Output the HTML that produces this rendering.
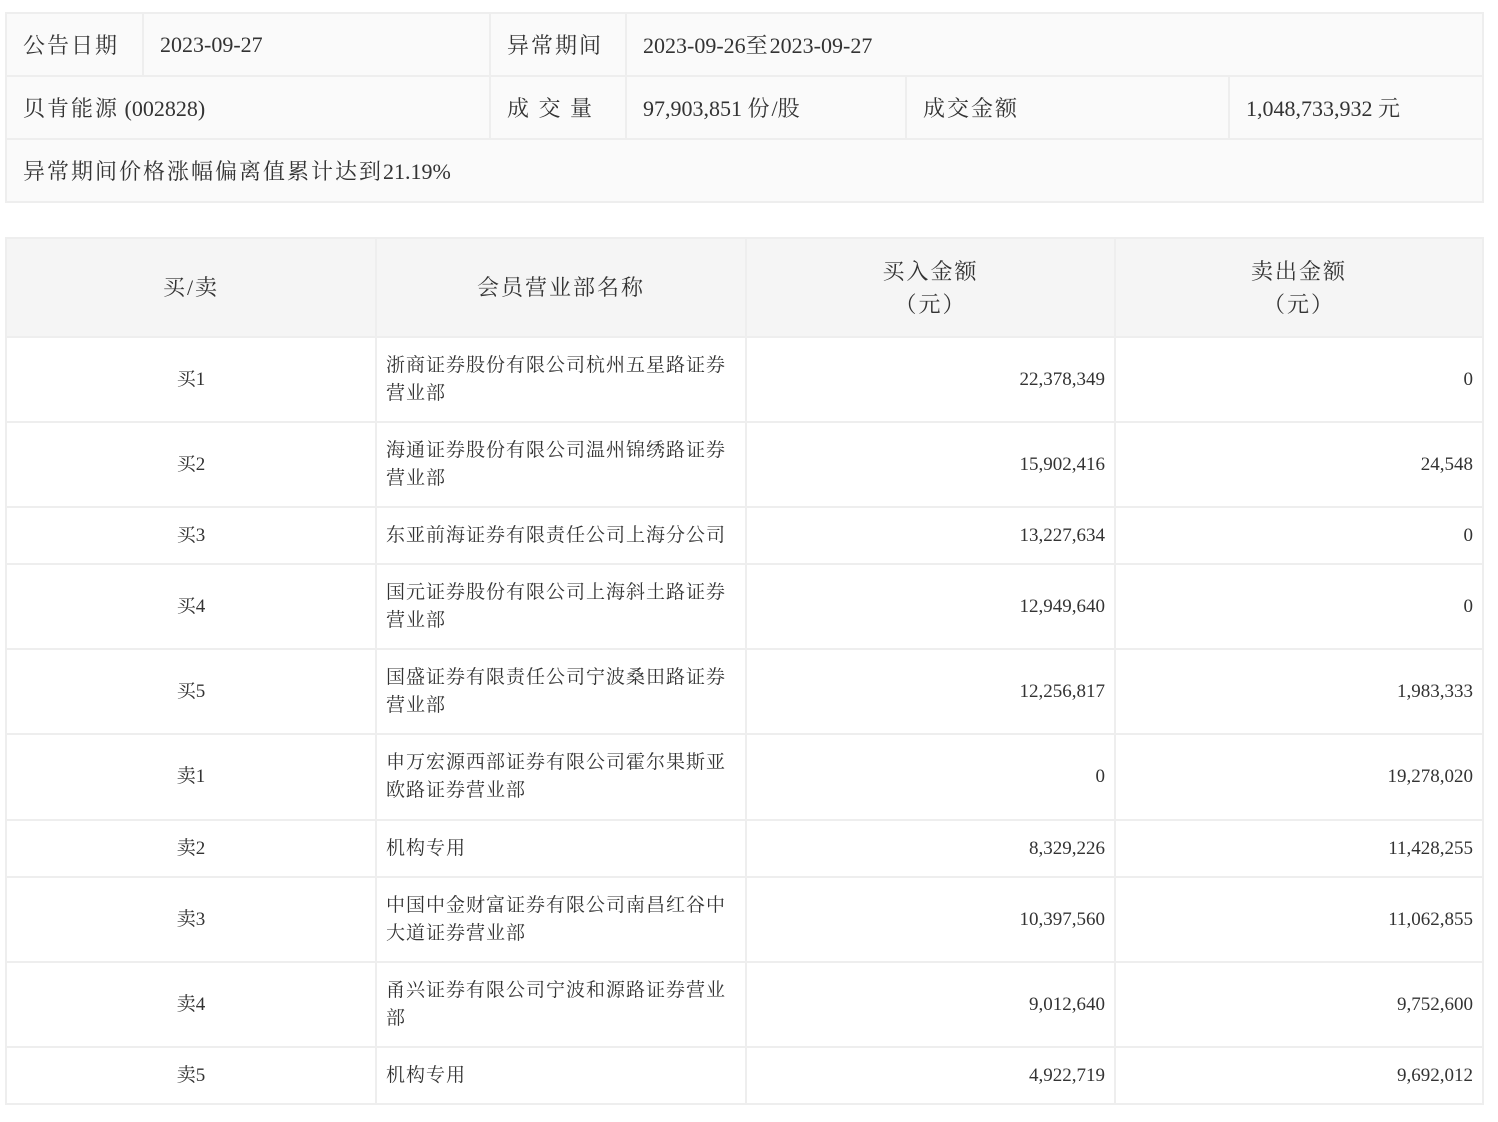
<!DOCTYPE html>
<html><head><meta charset="utf-8"><style>
body{margin:0;background:#fff;font-family:"Liberation Serif","Noto Serif CJK SC",serif;color:#333}
table{border-collapse:collapse;position:absolute;table-layout:fixed}
td{border:2px solid #eee;padding:0}
#t1{left:5px;top:12px;width:1477px;background:#fafafa;font-size:22px}
#t1 td{padding-left:16px;height:61px}
.k{letter-spacing:2px}
#t2{left:5px;top:237px;width:1477px;font-size:19px}
#t2 th{background:#f5f5f5;border:2px solid #eee;font-weight:normal;font-size:22px;height:95px;line-height:33px;letter-spacing:2px}
#t2 td{line-height:28px}
.c{text-align:center}.r{text-align:right;padding-right:9px}.l{padding-left:9px;padding-right:10px;letter-spacing:1px}
</style></head><body>
<table id="t1">
<colgroup><col style="width:137px"><col style="width:347px"><col style="width:136px"><col style="width:280px"><col style="width:323px"><col style="width:254px"></colgroup>
<tr><td class="k">公告日期</td><td>2023-09-27</td><td class="k">异常期间</td><td colspan="3">2023-09-26<span class="k">至</span>2023-09-27</td></tr>
<tr><td colspan="2"><span class="k">贝肯能源</span> (002828)</td><td class="k">成 交 量</td><td>97,903,851 <span class="k">份</span>/<span class="k">股</span></td><td class="k">成交金额</td><td>1,048,733,932 元</td></tr>
<tr><td colspan="6"><span class="k">异常期间价格涨幅偏离值累计达到</span>21.19%</td></tr>
</table>
<table id="t2">
<colgroup><col style="width:370px"><col style="width:370px"><col style="width:369px"><col style="width:368px"></colgroup>
<tr><th>买/卖</th><th>会员营业部名称</th><th>买入金额<br>（元）</th><th>卖出金额<br>（元）</th></tr>
<tr style="height:85px"><td class="c">买1</td><td class="l">浙商证券股份有限公司杭州五星路证券营业部</td><td class="r">22,378,349</td><td class="r">0</td></tr>
<tr style="height:85px"><td class="c">买2</td><td class="l">海通证券股份有限公司温州锦绣路证券营业部</td><td class="r">15,902,416</td><td class="r">24,548</td></tr>
<tr style="height:57px"><td class="c">买3</td><td class="l">东亚前海证券有限责任公司上海分公司</td><td class="r">13,227,634</td><td class="r">0</td></tr>
<tr style="height:85px"><td class="c">买4</td><td class="l">国元证券股份有限公司上海斜土路证券营业部</td><td class="r">12,949,640</td><td class="r">0</td></tr>
<tr style="height:85px"><td class="c">买5</td><td class="l">国盛证券有限责任公司宁波桑田路证券营业部</td><td class="r">12,256,817</td><td class="r">1,983,333</td></tr>
<tr style="height:86px"><td class="c">卖1</td><td class="l">申万宏源西部证券有限公司霍尔果斯亚欧路证券营业部</td><td class="r">0</td><td class="r">19,278,020</td></tr>
<tr style="height:57px"><td class="c">卖2</td><td class="l">机构专用</td><td class="r">8,329,226</td><td class="r">11,428,255</td></tr>
<tr style="height:85px"><td class="c">卖3</td><td class="l">中国中金财富证券有限公司南昌红谷中大道证券营业部</td><td class="r">10,397,560</td><td class="r">11,062,855</td></tr>
<tr style="height:85px"><td class="c">卖4</td><td class="l">甬兴证券有限公司宁波和源路证券营业部</td><td class="r">9,012,640</td><td class="r">9,752,600</td></tr>
<tr style="height:57px"><td class="c">卖5</td><td class="l">机构专用</td><td class="r">4,922,719</td><td class="r">9,692,012</td></tr>
</table>
</body></html>
